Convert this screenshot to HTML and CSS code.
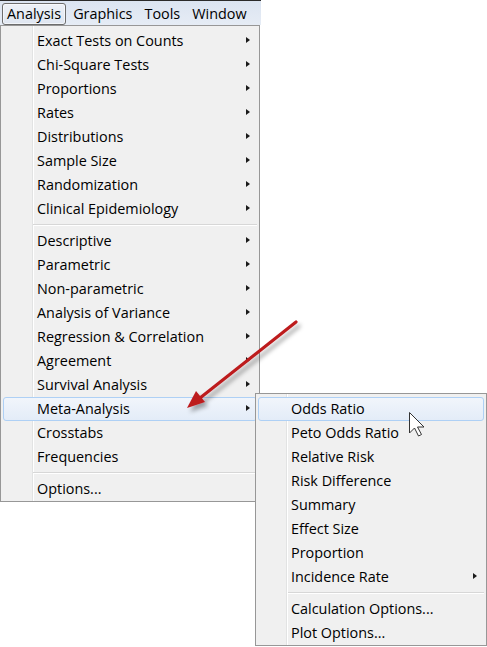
FILE: index.html
```html
<!DOCTYPE html>
<html>
<head>
<meta charset="utf-8">
<link rel="stylesheet" href="styles.css">
</head>
<body>
<div class="screen">
  <div class="menubar">
    <span class="mb-item active">Analysis</span>
    <span class="mb-item">Graphics</span>
    <span class="mb-item">Tools</span>
    <span class="mb-item">Window</span>
  </div>

  <div class="menu main-menu">
    <div class="item">Exact Tests on Counts<span class="arrow"></span></div>
    <div class="item">Chi-Square Tests<span class="arrow"></span></div>
    <div class="item">Proportions<span class="arrow"></span></div>
    <div class="item">Rates<span class="arrow"></span></div>
    <div class="item">Distributions<span class="arrow"></span></div>
    <div class="item">Sample Size<span class="arrow"></span></div>
    <div class="item">Randomization<span class="arrow"></span></div>
    <div class="item">Clinical Epidemiology<span class="arrow"></span></div>
    <div class="sep"></div>
    <div class="item">Descriptive<span class="arrow"></span></div>
    <div class="item">Parametric<span class="arrow"></span></div>
    <div class="item">Non-parametric<span class="arrow"></span></div>
    <div class="item">Analysis of Variance<span class="arrow"></span></div>
    <div class="item">Regression &amp; Correlation<span class="arrow"></span></div>
    <div class="item">Agreement<span class="arrow"></span></div>
    <div class="item">Survival Analysis<span class="arrow"></span></div>
    <div class="item hl">Meta-Analysis<span class="arrow"></span></div>
    <div class="item">Crosstabs</div>
    <div class="item">Frequencies</div>
    <div class="sep"></div>
    <div class="item">Options...</div>
  </div>

  <div class="menu sub-menu">
    <div class="item hl">Odds Ratio</div>
    <div class="item">Peto Odds Ratio</div>
    <div class="item">Relative Risk</div>
    <div class="item">Risk Difference</div>
    <div class="item">Summary</div>
    <div class="item">Effect Size</div>
    <div class="item">Proportion</div>
    <div class="item">Incidence Rate<span class="arrow"></span></div>
    <div class="sep"></div>
    <div class="item">Calculation Options...</div>
    <div class="item">Plot Options...</div>
  </div>

  <svg class="overlay" width="487" height="647" viewBox="0 0 487 647">
    <defs>
      <filter id="shadow" x="-20%" y="-20%" width="150%" height="150%">
        <feDropShadow dx="3" dy="4" stdDeviation="2" flood-color="#000" flood-opacity="0.35"/>
      </filter>
    </defs>
    <g filter="url(#shadow)">
      <line x1="296" y1="322" x2="200" y2="398" stroke="#bd1a1f" stroke-width="3.2" stroke-linecap="round"/>
      <polygon points="187,408 205,402 196,391" fill="#bd1a1f"/>
    </g>
    <path class="cursor" d="M409.5 412.5 L409.5 433 L414.5 428 L418.5 436 L421.5 434.5 L417.5 427 L424 427 Z"/>
  </svg>
</div>
</body>
</html>
```

FILE: styles.css
```css
* { box-sizing: border-box; }

html, body {
  margin: 0;
  padding: 0;
  background: #ffffff;
}

body {
  font-family: "Open Sans", "Noto Sans", "Liberation Sans", sans-serif;
  font-size: 14.4px;
  color: #000;
}

.screen {
  position: relative;
  width: 487px;
  height: 647px;
  overflow: hidden;
}

.menubar {
  width: 261px;
  height: 25px;
  border-top: 1px solid #2a2a2a;
  background: linear-gradient(#dbe4f1, #e6ecf5);
  display: flex;
  align-items: center;
  padding: 1px 0 0 2px;
  gap: 2px;
}

.mb-item {
  height: 22px;
  line-height: 19px;
  padding: 0 4px;
  border: 1px solid transparent;
  border-radius: 3px;
  white-space: nowrap;
}

.mb-item.active {
  border-color: #6d6d6d;
  background: linear-gradient(#edf1f7, #dfe6f0);
  box-shadow: inset 0 0 0 1px rgba(255,255,255,0.6);
}

.menu {
  background-color: #f0f0f0;
  border: 1px solid #979797;
  padding: 3px 2px 0 2px;
}

.main-menu {
  width: 260px;
  height: 477px;
  background-image: linear-gradient(to right, transparent 31px, #e2e3e3 31px, #e2e3e3 32px, #ffffff 32px, #ffffff 33px, transparent 33px);
}

.sub-menu {
  position: absolute;
  left: 255px;
  top: 393px;
  width: 232px;
  height: 253px;
  background-image: linear-gradient(to right, transparent 30px, #e2e3e3 30px, #e2e3e3 31px, #ffffff 31px, #ffffff 32px, transparent 32px);
}

.item {
  position: relative;
  height: 24px;
  line-height: 21px;
  padding-left: 33px;
  border: 1px solid transparent;
  border-radius: 3px;
  white-space: nowrap;
}

.sub-menu .item {
  padding-left: 32px;
}

.item.hl {
  border-color: #aed0f5;
  background: linear-gradient(#f1f5fb, #e3ecf8);
}

.arrow {
  position: absolute;
  right: 6px;
  top: 7px;
  width: 0;
  height: 0;
  border-left: 4px solid #1a1a1a;
  border-top: 3.5px solid transparent;
  border-bottom: 3.5px solid transparent;
}

.sep {
  height: 8px;
  margin-left: 30px;
  padding-top: 3px;
}

.sep::before {
  content: "";
  display: block;
  border-top: 1px solid #d7d7d7;
  border-bottom: 1px solid #ffffff;
}

.overlay {
  position: absolute;
  left: 0;
  top: 0;
  pointer-events: none;
}

.cursor {
  fill: #ffffff;
  stroke: #333;
  stroke-width: 1;
  stroke-linejoin: miter;
}
```
